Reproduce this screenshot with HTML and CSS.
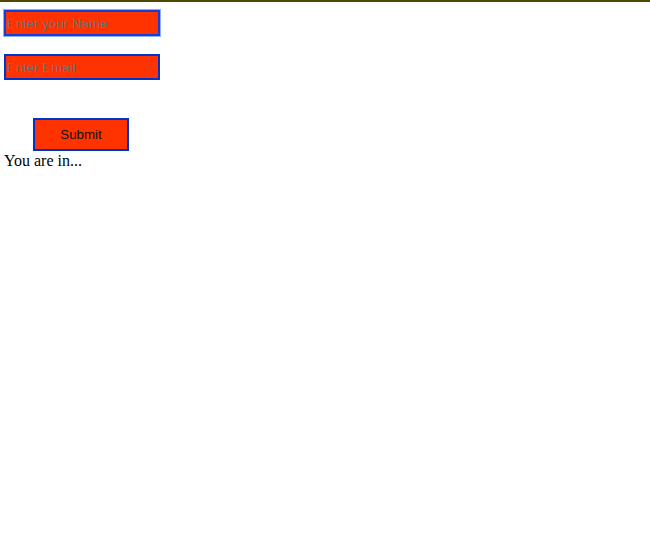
FILE: index.html
```html
<!DOCTYPE html>
<html>
<head>
<meta charset="utf-8">
<link rel="stylesheet" href="styles.css">
</head>
<body>
<div class="topbar"></div>
<form class="form">
  <input class="field field-focus" type="text" placeholder="Enter your Name" autofocus>
  <input class="field field-email" type="text" placeholder="Enter Email">
  <button class="submit" type="button">Submit</button>
</form>
<div class="status">You are in...</div>
</body>
</html>
```
FILE: styles.css
```css
html, body {
  margin: 0;
  padding: 0;
  background: #ffffff;
}
body {
  font-family: "Liberation Serif", "Times New Roman", serif;
  font-size: 16px;
}
.topbar {
  height: 2px;
  background: #4d4a00;
}
.form {
  display: flex;
  flex-direction: column;
  align-items: flex-start;
  padding: 8px 0 0 4px;
}
.field {
  box-sizing: border-box;
  width: 156px;
  height: 26px;
  margin: 0;
  padding: 1px 1px;
  border: 2px solid #0033cc;
  background: #ff3300;
  font-family: "Liberation Sans", Arial, sans-serif;
  font-size: 13.33px;
  color: #000;
  caret-color: #000;
  outline: none;
}
.field::placeholder {
  color: #707070;
  opacity: 1;
}
.field-focus {
  border-color: #1040d8;
  box-shadow: 0 0 0 1px #8fb0f0;
}
.field-email {
  margin-top: 18px;
}
.submit {
  box-sizing: border-box;
  margin: 38px 0 0 29px;
  width: 96px;
  height: 33px;
  padding: 0;
  border: 2px solid #0033cc;
  background: #ff3300;
  font-family: "Liberation Sans", Arial, sans-serif;
  font-size: 13.33px;
  color: #111;
}
.status {
  padding-left: 4px;
  line-height: 18px;
  margin-top: 1px;
}
```
